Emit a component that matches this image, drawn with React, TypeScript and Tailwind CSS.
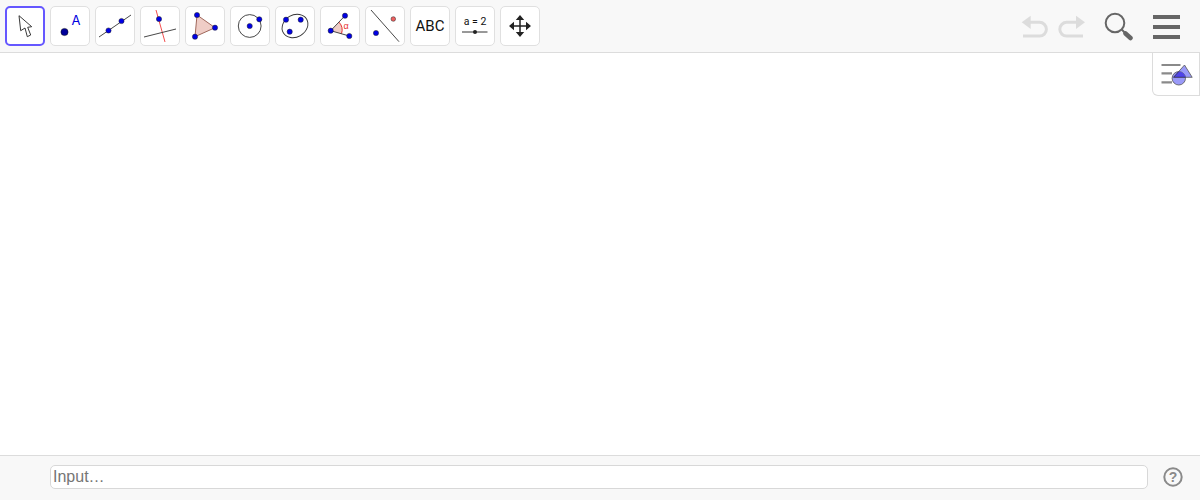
import React from "react";

const Pt = ({ x, y, r = 2.6, fill = "#0000e6" }: { x: number; y: number; r?: number; fill?: string }) => (
  <circle cx={x} cy={y} r={r} fill={fill} stroke="#222" strokeWidth={0.5} />
);

const Icon = ({ children }: { children: React.ReactNode }) => (
  <svg viewBox="0 0 40 40" className="w-10 h-10 block">
    {children}
  </svg>
);

const tools: React.ReactNode[] = [
  <Icon>
    <path d="M14 9.7 L15.7 24.7 L20 22 L22.3 30.7 L25.7 29 L22.7 21.3 L26.7 20.7 Z" fill="#fff" stroke="#222" strokeWidth={0.9} strokeLinejoin="round" />
  </Icon>,
  <Icon>
    <circle cx={14.5} cy={26} r={3.6} fill="#00009a" stroke="#111" strokeWidth={0.5} />
    <text x={26} y={19} textAnchor="middle" fontSize={13} fill="#0000e0" fontFamily="Inter, sans-serif">A</text>
  </Icon>,
  <Icon>
    <line x1={4} y1={31} x2={36} y2={9} stroke="#333" strokeWidth={0.9} />
    <Pt x={13.5} y={24.5} />
    <Pt x={26.5} y={15} />
  </Icon>,
  <Icon>
    <line x1={16} y1={4} x2={25} y2={36} stroke="#f03a3a" strokeWidth={0.9} />
    <line x1={4} y1={31} x2={36} y2={23} stroke="#333" strokeWidth={0.9} />
    <Pt x={19} y={13} />
  </Icon>,
  <Icon>
    <polygon points="12,9 30,21.7 10,30.7" fill="#efcdc6" stroke="#a0685c" strokeWidth={1} />
    <Pt x={12} y={9} />
    <Pt x={30} y={21.7} />
    <Pt x={10} y={30.7} />
  </Icon>,
  <Icon>
    <circle cx={19.7} cy={20} r={11.4} fill="none" stroke="#333" strokeWidth={0.9} />
    <Pt x={19.7} y={20} />
    <Pt x={29.3} y={13.3} />
  </Icon>,
  <Icon>
    <ellipse cx={20} cy={20} rx={13.5} ry={11} transform="rotate(-30 20 20)" fill="none" stroke="#333" strokeWidth={0.9} />
    <Pt x={11} y={13.7} />
    <Pt x={25.7} y={13.7} />
    <Pt x={14.7} y={25.7} />
  </Icon>,
  <Icon>
    <path d="M10.7 24.7 L19 16.2 A11.5 11.5 0 0 1 21.5 27.7 Z" fill="#efcdc6" />
    <path d="M19 16.2 A11.5 11.5 0 0 1 21.5 27.7" fill="none" stroke="#e83030" strokeWidth={1} />
    <line x1={10.7} y1={24.7} x2={25} y2={9.7} stroke="#333" strokeWidth={0.9} />
    <line x1={10.7} y1={24.7} x2={29.3} y2={30} stroke="#333" strokeWidth={0.9} />
    <Pt x={10.7} y={24.7} />
    <Pt x={25} y={9.7} />
    <Pt x={29.3} y={30} />
    <text x={26} y={23} textAnchor="middle" fontSize={9} fill="#e83030" fontFamily="Liberation Sans, sans-serif">α</text>
  </Icon>,
  <Icon>
    <line x1={6} y1={4} x2={34} y2={35.7} stroke="#333" strokeWidth={0.9} />
    <Pt x={11} y={27} />
    <Pt x={28.3} y={13} r={2.3} fill="#f06060" />
  </Icon>,
  <span className="text-[15px] text-[#111] font-['Roboto',sans-serif]">ABC</span>,
  <Icon>
    <text x={20} y={18.5} textAnchor="middle" fontSize={10.5} fill="#111" fontFamily="Roboto, sans-serif">a = 2</text>
    <line x1={7} y1={26} x2={32.5} y2={26} stroke="#333" strokeWidth={1} />
    <circle cx={20} cy={26} r={2} fill="#222" />
  </Icon>,
  <Icon>
    <path d="M20 12 V28 M12 20 H28" stroke="#222" strokeWidth={1.5} />
    <path d="M20 9 L24.2 14 H15.8 Z M20 31 L24.2 26 H15.8 Z M9 20 L14 15.8 V24.2 Z M31 20 L26 15.8 V24.2 Z" fill="#222" />
  </Icon>,
];

export default function App() {
  return (
    <div className="w-[1200px] h-[500px] flex flex-col bg-white overflow-hidden font-['Liberation_Sans',sans-serif]">
      <div className="h-[53px] shrink-0 flex items-start bg-[#f8f8f8] border-b border-[#dcdcdc] pt-[6px] pl-[5px]">
        <div className="flex gap-[5px]">
          {tools.map((t, i) => (
            <div
              key={i}
              className={
                i === 0
                  ? "w-10 h-10 rounded-[5px] bg-white flex items-center justify-center border-2 border-[#6557ff] [&>svg]:shrink-0"
                  : "w-10 h-10 rounded-[5px] bg-white flex items-center justify-center border border-[#e0e0e0] [&>svg]:shrink-0"
              }
            >
              {t}
            </div>
          ))}
        </div>
        <div className="ml-auto flex items-start">
          <svg viewBox="0 0 28 24" className="w-7 h-6 mt-[9px] mr-[9px]">
            <path d="M9 7.3 H19.5 A6.9 6.9 0 0 1 19.5 21.1 H3" fill="none" stroke="#dcdcdc" strokeWidth={3} />
            <path d="M1.7 7.3 L10.7 0.7 V14 Z" fill="#dcdcdc" />
          </svg>
          <svg viewBox="0 0 28 24" className="w-7 h-6 mt-[9px] mr-[19px]">
            <path d="M20 7.3 H9.7 A6.9 6.9 0 0 0 9.7 21.1 H26" fill="none" stroke="#dcdcdc" strokeWidth={3} />
            <path d="M28 7.3 L19 0.7 V14 Z" fill="#dcdcdc" />
          </svg>
          <svg viewBox="0 0 30 30" className="w-[30px] h-[30px] mt-[5px] mr-[19px]">
            <circle cx={11} cy={12} r={9.3} fill="none" stroke="#666" strokeWidth={2} />
            <path d="M17.7 18.3 L21 22" stroke="#666" strokeWidth={2} />
            <path d="M21.5 22.5 L26.5 27" stroke="#666" strokeWidth={4.5} strokeLinecap="round" />
          </svg>
          <div className="w-[27px] mt-[9px] mr-[20px] flex flex-col gap-[6.5px]">
            <div className="h-[3.5px] bg-[#666]" />
            <div className="h-[3.5px] bg-[#666]" />
            <div className="h-[3.5px] bg-[#666]" />
          </div>
        </div>
      </div>

      <div className="flex-1 relative bg-white">
        <div className="absolute top-0 right-0 w-[48px] h-[43px] bg-white border-l border-r border-b border-[#dcdcdc] rounded-bl-[6px] flex items-center justify-center">
          <svg viewBox="0 0 34 26" className="w-[34px] h-[26px]">
            <defs>
              <clipPath id="sideCircle">
                <circle cx={19.8} cy={17.3} r={6.7} />
              </clipPath>
            </defs>
            <path d="M2.5 4 H21.5 M2.5 12.3 H13 M2.5 21.3 H13" stroke="#8a8a8a" strokeWidth={2.2} />
            <polygon points="25.5,4 33.2,16.3 14.5,16.3" fill="#9a9af8" stroke="#555" strokeWidth={0.8} />
            <circle cx={19.8} cy={17.3} r={6.7} fill="#9a9af8" stroke="#555" strokeWidth={0.8} />
            <polygon points="25.5,4 33.2,16.3 14.5,16.3" fill="#4f44e8" stroke="#222" strokeWidth={0.7} clipPath="url(#sideCircle)" />
          </svg>
        </div>
      </div>

      <div className="h-[45px] shrink-0 flex items-start bg-[#f8f8f8] border-t border-[#dcdcdc] pt-[9px] pl-[50px]">
        <div className="w-[1098px] h-[24px] bg-white border border-[#d8d8d8] rounded-[5px] flex items-center pl-[2px] text-[16px] leading-none text-[#757575]">
          Input…
        </div>
        <svg viewBox="0 0 20 20" className="w-5 h-5 ml-[15px] mt-[2px]">
          <circle cx={10} cy={10} r={8.7} fill="none" stroke="#8a8a8a" strokeWidth={2} />
          <text x={10} y={15} textAnchor="middle" fontSize={14} fontWeight={700} fill="#8a8a8a" fontFamily="Liberation Sans, sans-serif">?</text>
        </svg>
      </div>
    </div>
  );
}
